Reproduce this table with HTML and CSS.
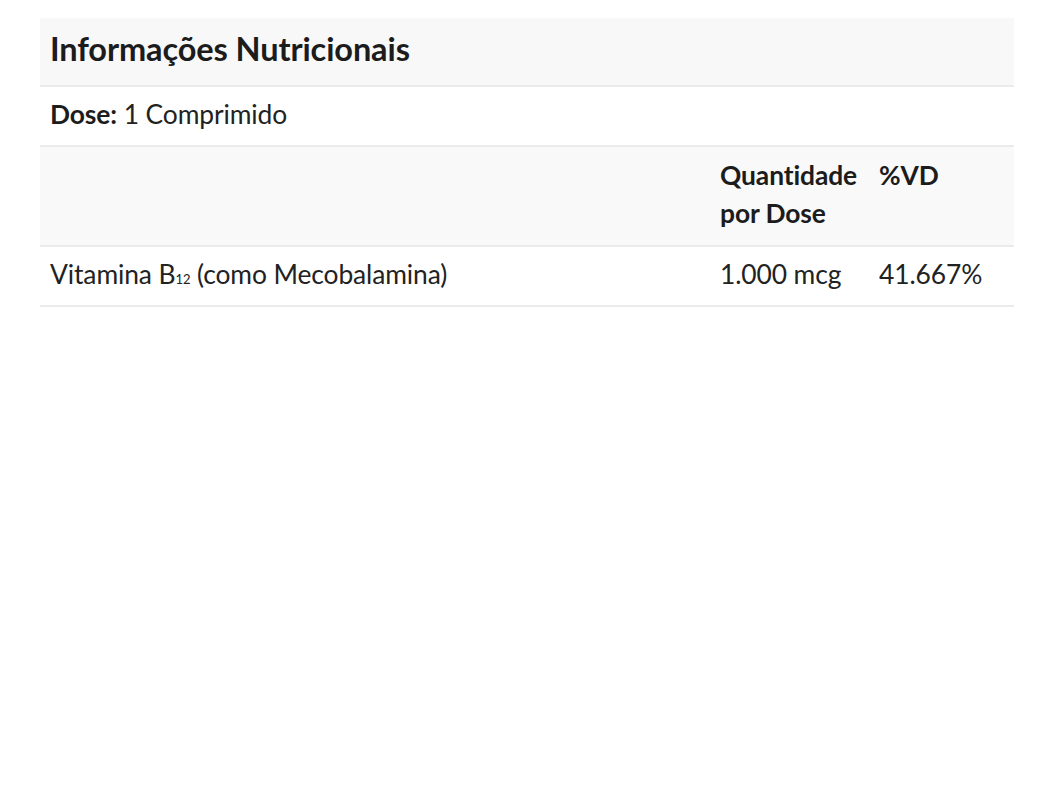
FILE: index.html
```html
<!DOCTYPE html>
<html lang="pt">
<head>
<meta charset="utf-8">
<link rel="stylesheet" href="styles.css">
</head>
<body>
<div class="panel">
  <table class="nutri">
    <colgroup>
      <col class="c-name">
      <col class="c-qty">
      <col class="c-vd">
    </colgroup>
    <thead>
      <tr class="title-row"><th colspan="3" class="title">Informações Nutricionais</th></tr>
      <tr class="dose-row"><td colspan="3"><strong>Dose:</strong> 1 Comprimido</td></tr>
      <tr class="head-row">
        <th></th>
        <th>Quantidade por Dose</th>
        <th>%VD</th>
      </tr>
    </thead>
    <tbody>
      <tr class="data-row">
        <td>Vitamina B<sub class="sub">12</sub> (como Mecobalamina)</td>
        <td>1.000 mcg</td>
        <td>41.667%</td>
      </tr>
    </tbody>
  </table>
</div>
</body>
</html>
```
FILE: styles.css
```css
html, body {
  margin: 0;
  padding: 0;
  background: #ffffff;
}
body {
  font-family: Lato, "Liberation Sans", sans-serif;
  color: #222222;
}
.panel {
  padding: 18px 23px 0 40px;
}
.nutri {
  width: 974px;
  border-collapse: collapse;
  table-layout: fixed;
  font-size: 26.4px;
  line-height: 38px;
  letter-spacing: -0.1px;
}
.c-name { width: 670px; }
.c-qty { width: 159px; }
.c-vd { width: 145px; }
.nutri th, .nutri td {
  text-align: left;
  vertical-align: top;
  padding: 9px 2px 13px 10px;
  border-bottom: 2px solid #ebebeb;
}
.title-row th {
  background: #f8f8f8;
  font-size: 32.5px;
  font-weight: 700;
  color: #1c1c1c;
  padding: 12px 10px 17px 10px;
  line-height: 38px;
}
.dose-row td {
  padding: 8px 10px 12px 10px;
}
.dose-row strong {
  font-weight: 700;
  color: #1c1c1c;
}
.head-row th {
  background: #f9f9f9;
  font-weight: 700;
  color: #1c1c1c;
  padding: 9px 2px 13px 10px;
}
.data-row td {
  padding: 8px 2px 12px 10px;
}
.sub {
  font-size: 13px;
  vertical-align: baseline;
  line-height: 0;
}
```
